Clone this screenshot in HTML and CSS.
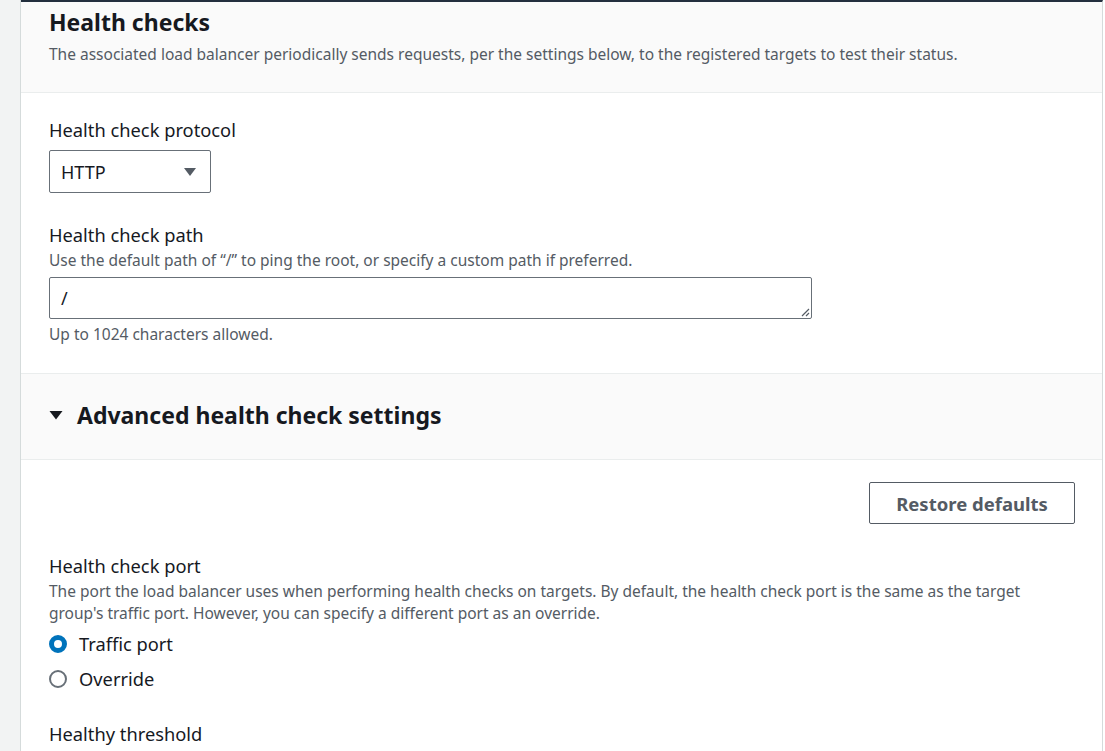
FILE: index.html
```html
<!DOCTYPE html>
<html>
<head>
<meta charset="utf-8">
<link rel="stylesheet" href="styles.css">
</head>
<body>
<div class="page">
  <div class="gutter"></div>
  <div class="card">
    <div class="card-header">
      <h2 class="title">Health checks</h2>
      <p class="desc">The associated load balancer periodically sends requests, per the settings below, to the registered targets to test their status.</p>
    </div>
    <div class="card-body">
      <div class="field">
        <div class="label">Health check protocol</div>
        <div class="select">
          <span>HTTP</span>
          <svg class="caret" width="14" height="10" viewBox="0 0 14 10"><path d="M1 1h12L7 9z" fill="#545b64"/></svg>
        </div>
      </div>
      <div class="field">
        <div class="label">Health check path</div>
        <div class="help">Use the default path of “/” to ping the root, or specify a custom path if preferred.</div>
        <div class="textarea">
          <span>/</span>
          <svg class="grip" width="10" height="10" viewBox="0 0 10 10"><path d="M9 2L2 9M9 6L6 9" stroke="#545b64" stroke-width="1.2"/></svg>
        </div>
        <div class="hint">Up to 1024 characters allowed.</div>
      </div>
    </div>
    <div class="adv-header">
      <svg class="adv-caret" width="14" height="10" viewBox="0 0 14 10"><path d="M0.5 1h13L7 9.5z" fill="#16191f"/></svg>
      <h2 class="title adv-title">Advanced health check settings</h2>
    </div>
    <div class="adv-body">
      <div class="actions"><button class="btn">Restore defaults</button></div>
      <div class="field port">
        <div class="label">Health check port</div>
        <div class="help">The port the load balancer uses when performing health checks on targets. By default, the health check port is the same as the target group's traffic port. However, you can specify a different port as an override.</div>
        <div class="radios">
          <div class="radio"><span class="dot checked"></span><span>Traffic port</span></div>
          <div class="radio"><span class="dot"></span><span>Override</span></div>
        </div>
      </div>
      <div class="field threshold">
        <div class="label">Healthy threshold</div>
      </div>
    </div>
  </div>
</div>
</body>
</html>
```
FILE: styles.css
```css
* { box-sizing: border-box; }
html, body { margin: 0; padding: 0; background: #fff; }
body {
  font-family: "Noto Sans", "Open Sans", sans-serif;
  color: #16191f;
  width: 1105px;
  height: 751px;
  overflow: hidden;
}
.page { display: flex; height: 751px; }
.gutter { width: 21px; flex: none; background: #f2f3f3; border-right: 1px solid #d5dbdb; }
.card {
  width: 1082px;
  flex: none;
  border-top: 2px solid #232f3e;
  border-right: 1px solid #d5dbdb;
  background: #fff;
}
.card-header {
  background: #fafafa;
  border-bottom: 1px solid #eaeded;
  padding: 4px 27px 0 28px;
  height: 91px;
}
.title { margin: 0; font-size: 23px; font-weight: 700; line-height: 32px; color: #16191f; }
.desc { margin: 5px 0 0; font-size: 15.5px; line-height: 22px; color: #545b64; }
.card-body { padding: 24px 27px 28px 28px; border-bottom: 1px solid #eaeded; }
.field { margin-bottom: 29px; }
.field:last-child { margin-bottom: 0; }
.label { font-size: 18.3px; line-height: 26px; }
.help { font-size: 15.5px; line-height: 22px; color: #545b64; margin-top: 1px; }
.hint { font-size: 15.5px; line-height: 22px; color: #545b64; margin-top: 4px; }
.select {
  margin-top: 7px;
  width: 162px; height: 43px;
  border: 1px solid #687078; border-radius: 2px;
  display: flex; align-items: center; justify-content: space-between;
  padding: 0 13px 0 11px;
  font-size: 18px;
}
.caret { display: block; }
.textarea {
  margin-top: 6px;
  width: 763px; height: 42px;
  border: 1px solid #687078; border-radius: 2px;
  position: relative;
  padding: 7px 11px;
  font-size: 18px; line-height: 26px;
}
.grip { position: absolute; right: 1px; bottom: 1px; }
.adv-header {
  background: #fafafa;
  border-bottom: 1px solid #eaeded;
  height: 86px;
  display: flex; align-items: center;
  padding: 0 27px 3px 28px;
  gap: 14px;
}
.adv-caret { display: block; }
.adv-body { padding: 22px 27px 0 28px; }
.actions { display: flex; justify-content: flex-end; margin-bottom: 29px; }
.btn {
  width: 206px; height: 42px;
  background: #fff;
  border: 1px solid #545b64; border-radius: 2px;
  font-family: inherit; font-size: 18.5px; font-weight: 700; color: #545b64;
}
.radios { margin-top: 2px; }
.radio { display: flex; align-items: center; gap: 12px; font-size: 18.3px; line-height: 35px; }
.dot { width: 18px; height: 18px; border-radius: 50%; border: 2px solid #687078; display: inline-block; flex: none; }
.dot.checked { border: 5px solid #0073bb; }
.field.port { margin-bottom: 25px; }
```
